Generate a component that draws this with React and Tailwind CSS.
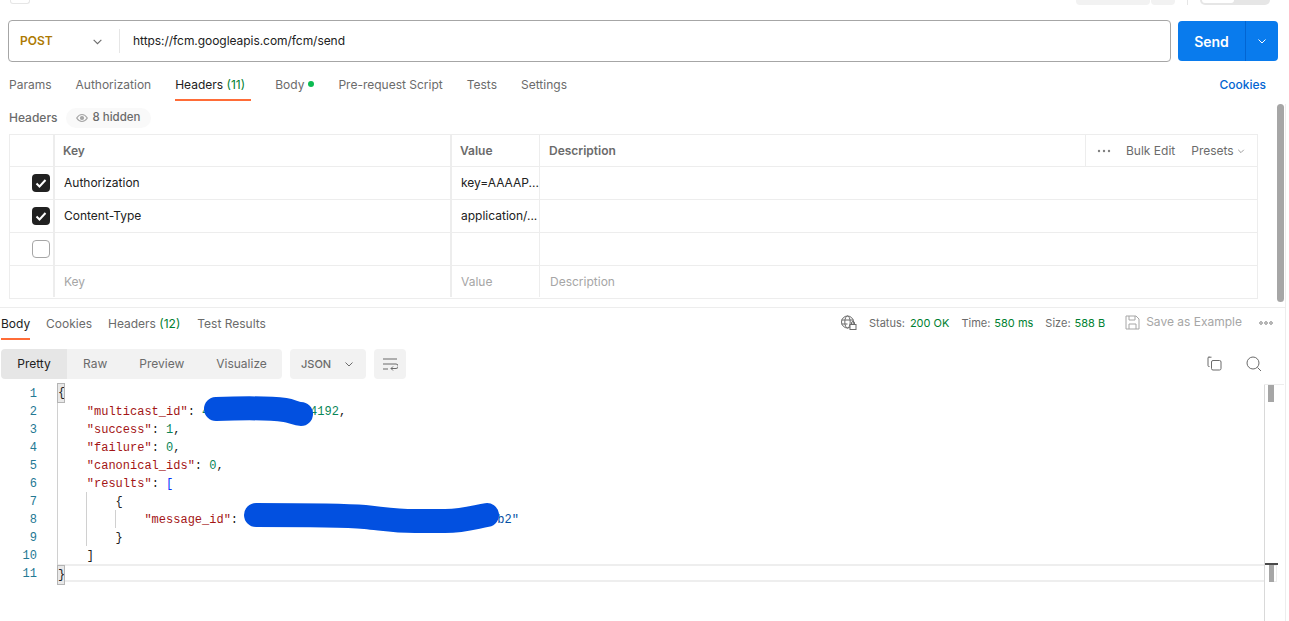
import React from "react";

const Chevron = ({ className = "", color = "#6b6b6b", size = 10 }) => (
  <svg width={size} height={size} viewBox="0 0 10 10" className={className} fill="none" stroke={color} strokeWidth="1">
    <path d="M1.5 3.5 5 7l3.5-3.5" />
  </svg>
);

const Check = () => (
  <div className="w-[18px] h-[18px] rounded-[4px] bg-[#212121] flex items-center justify-center">
    <svg width="12" height="12" viewBox="0 0 12 12" fill="none" stroke="#fff" strokeWidth="2">
      <path d="M1.5 6.5 4.5 9.5 10.5 3" />
    </svg>
  </div>
);

const Row = ({ check, k, v, d, muted }) => (
  <div className="flex h-[33px] last:h-[32px] last:pb-[1px] border-b border-[#ededed] last:border-b-0 text-[12px]">
    <div className="w-[45px] border-r-2 border-[#ededed] flex items-center justify-end pr-[3px] shrink-0">
      {check === "on" && <Check />}
      {check === "off" && <div className="w-[18px] h-[18px] rounded-[4px] border border-[#a6a6a6] bg-white" />}
    </div>
    <div className={`w-[397px] border-r-2 border-[#ededed] flex items-center pl-[9px] shrink-0 ${muted ? "text-[#a6a6a6]" : "text-[#212121]"}`}>{k}</div>
    <div className={`w-[88px] border-r border-[#ededed] flex items-center pl-[9px] shrink-0 ${muted ? "text-[#a6a6a6]" : "text-[#212121]"}`}>{v}</div>
    <div className={`flex-1 flex items-center pl-[10px] ${muted ? "text-[#a6a6a6]" : ""}`}>{d}</div>
  </div>
);

const K = ({ children }) => <span className="text-[#a31515]">{children}</span>;
const N = ({ children }) => <span className="text-[#098658]">{children}</span>;
const P = ({ children }) => <span className="text-[#212121]">{children}</span>;

const lines = [
  <span className="relative inline-block w-[6px] h-[18px] bg-[#e8e8e8] outline outline-1 outline-[#b5b5b5] leading-[18px] text-[#212121]">{"{"}</span>,
  <>{"    "}<K>"multicast_id"</K><P>: </P><N>4</N>{"              "}<N>4192</N><P>,</P></>,
  <>{"    "}<K>"success"</K><P>: </P><N>1</N><P>,</P></>,
  <>{"    "}<K>"failure"</K><P>: </P><N>0</N><P>,</P></>,
  <>{"    "}<K>"canonical_ids"</K><P>: </P><N>0</N><P>,</P></>,
  <>{"    "}<K>"results"</K><P>: </P><span className="text-[#0431fa]">[</span></>,
  <>{"        "}<P>{"{"}</P></>,
  <>{"            "}<K>"message_id"</K><P>: </P>{"                                   "}<span className="text-[#0451a5]">b2"</span></>,
  <>{"        "}<P>{"}"}</P></>,
  <>{"    "}<P>]</P></>,
  <span className="relative inline-block w-[6px] h-[18px] -mt-[2px] bg-[#e8e8e8] outline outline-1 outline-[#b5b5b5] leading-[18px] text-[#212121]">{"}"}</span>,
];

export default function App() {
  return (
    <div className="relative w-[1289px] h-[621px] overflow-hidden bg-white text-[12px] text-[#6b6b6b]" style={{ fontFamily: "Inter, sans-serif" }}>
      {/* top strip cut off by the window */}
      <div className="h-[20px] flex items-start pl-[10px] pr-[19px]">
        <div className="w-[20px] h-[4px] border border-t-0 border-[#e6e6e6] rounded-b-[3px]" />
        <div className="ml-auto flex items-start">
          <div className="w-[74px] h-[5px] bg-[#f2f2f2] rounded-b-[4px]" />
          <div className="ml-px w-[24px] h-[5px] bg-[#f2f2f2] rounded-b-[4px]" />
          <div className="ml-[12px] w-px h-[5px] bg-[#e6e6e6]" />
          <div className="ml-[12px] w-[70px] h-[5px] bg-[#e6e6e6] rounded-b-[5px] overflow-hidden">
            <div className="ml-[2px] w-[32px] h-[3px] bg-white rounded-b-[4px]" />
          </div>
        </div>
      </div>

      {/* url bar */}
      <div className="flex items-center h-[42px] pl-[8px]">
        <div className="w-[1163px] h-[42px] border border-[#a6a6a6] rounded-[4px] flex items-center">
          <span className="ml-[11px] w-[72px] font-semibold text-[#ad7a03]">POST</span>
          <Chevron size={11} />
          <div className="ml-[16px] w-px h-[24px] bg-[#e6e6e6]" />
          <span className="ml-[13px] text-[#212121] tracking-[-0.05px]">https://fcm.googleapis.com/fcm/send</span>
        </div>
        <div className="ml-[7px] w-[100px] h-[40px] rounded-[4px] bg-[#097bed] flex text-white">
          <div className="w-[67px] flex items-center justify-center text-[14px] font-semibold">Send</div>
          <div className="flex-1 border-l border-[#0265d2] flex items-center justify-center">
            <Chevron color="#ffffff" size={10} />
          </div>
        </div>
      </div>

      {/* request tabs */}
      <div className="flex h-[39px] pl-[9px] pr-[23px] pt-[4px] items-start">
        <div className="flex gap-[24px]">
          <span className="pt-[10px]">Params</span>
          <span className="pt-[10px]">Authorization</span>
          <span className="pt-[10px] w-[76px] h-[35px] text-[#212121] border-b-2 border-[#ff6c37] whitespace-nowrap">
            Headers <span className="text-[#007f31]">(11)</span>
          </span>
          <span className="pt-[10px] flex items-start gap-[4px]">Body<span className="w-[6px] h-[6px] mt-[5px] rounded-full bg-[#0cbb52]" /></span>
          <span className="pt-[10px]">Pre-request Script</span>
          <span className="pt-[10px]">Tests</span>
          <span className="pt-[10px]">Settings</span>
        </div>
        <span className="ml-auto pt-[10px] font-medium text-[#0265d2]">Cookies</span>
      </div>

      {/* headers subheader */}
      <div className="flex items-center h-[21px] mt-[6px] pl-[9px] gap-[8px]">
        <span className="font-medium">Headers</span>
        <span className="h-[20px] px-[10px] rounded-full bg-[#f9f9f9] flex items-center gap-[5px] text-[11.5px] font-medium">
          <svg width="12" height="10" viewBox="0 0 12 10" fill="none" stroke="#a6a6a6" strokeWidth="1.2">
            <path d="M.7 5C2.2 2.6 4 1.5 6 1.5S9.8 2.6 11.3 5C9.8 7.4 8 8.5 6 8.5S2.2 7.4.7 5Z" />
            <circle cx="6" cy="5" r="1.5" fill="#a6a6a6" />
          </svg>
          8 hidden
        </span>
      </div>

      {/* headers table */}
      <div className="ml-[9px] mt-[6px] w-[1249px] border border-[#ededed]">
        <div className="flex h-[32px] border-b border-[#ededed] font-semibold">
          <div className="w-[45px] border-r-2 border-[#ededed] shrink-0" />
          <div className="w-[397px] border-r-2 border-[#ededed] flex items-center pl-[8px] shrink-0">Key</div>
          <div className="w-[88px] border-r border-[#ededed] flex items-center pl-[8px] shrink-0">Value</div>
          <div className="flex-1 flex items-center pl-[9px]">Description</div>
          <div className="w-[172px] border-l border-[#ededed] flex items-center font-normal">
            <svg width="14" height="4" viewBox="0 0 14 4" className="ml-[11px]" fill="#808080">
              <circle cx="2" cy="2" r="1.2" /><circle cx="7" cy="2" r="1.2" /><circle cx="12" cy="2" r="1.2" />
            </svg>
            <span className="ml-[15px]">Bulk Edit</span>
            <span className="ml-[16px]">Presets</span>
            <Chevron className="ml-[3px]" size={8} color="#858585" />
          </div>
        </div>
        <Row check="on" k="Authorization" v="key=AAAAP..." />
        <Row check="on" k="Content-Type" v="application/..." />
        <Row check="off" />
        <Row muted k="Key" v="Value" d="Description" />
      </div>

      {/* response tabs */}
      <div className="mt-[8px] h-[33px] border-t border-[#ededed] mr-[4px] flex items-start pl-[1px] pr-[12px]">
        <div className="flex gap-[16px]">
          <span className="h-[32px] pt-[7px] w-[29px] text-[#212121] border-b-2 border-[#ff6c37]">Body</span>
          <span className="pt-[7px]">Cookies</span>
          <span className="pt-[7px]">Headers <span className="text-[#007f31]">(12)</span></span>
          <span className="pt-[7px] ml-[1px]">Test Results</span>
        </div>
        <div className="ml-auto flex items-center pt-[7px] text-[11px]">
          <svg width="17" height="16" viewBox="0 0 17 16" fill="none" stroke="#6b6b6b" strokeWidth="1">
            <circle cx="7.5" cy="7" r="6" />
            <ellipse cx="7.5" cy="7" rx="2.7" ry="6" />
            <path d="M1.5 5h12M1.5 9h6" />
            <rect x="10" y="9.5" width="6" height="5" fill="#fff" />
            <path d="M11.5 9.5V8a1.5 1.5 0 0 1 3 0v1.5" />
          </svg>
          <span className="ml-[12px]">Status:</span>
          <span className="ml-[5px] text-[#007f31]">200 OK</span>
          <span className="ml-[12px]">Time:</span>
          <span className="ml-[4px] text-[#007f31]">580 ms</span>
          <span className="ml-[12px]">Size:</span>
          <span className="ml-[4px] text-[#007f31]">588 B</span>
          <svg className="ml-[20px] -mt-[2px]" width="15" height="15" viewBox="0 0 15 15" fill="none" stroke="#a6a6a6" strokeWidth="1">
            <path d="M1 1h10l3 3v10H1Z" /><path d="M4 1v4h6V1M4 14V9h7v5" />
          </svg>
          <span className="ml-[6px] -mt-[2px] text-[12px] text-[#a6a6a6]">Save as Example</span>
          <svg className="ml-[17px]" width="14" height="4" viewBox="0 0 14 4" fill="none" stroke="#6b6b6b" strokeWidth=".8">
            <circle cx="2" cy="2" r="1.3" /><circle cx="7" cy="2" r="1.3" /><circle cx="12" cy="2" r="1.3" />
          </svg>
        </div>
      </div>

      {/* response toolbar */}
      <div className="mt-[8px] h-[31px] flex items-center pl-[1px] pr-[27px]">
        <div className="w-[281px] h-[30px] bg-[#f2f2f2] rounded-[4px] flex items-center overflow-hidden">
          <span className="w-[66px] h-full bg-[#e6e6e6] text-[#212121] flex items-center justify-center rounded-l-[4px]">Pretty</span>
          <span className="ml-[16px]">Raw</span>
          <span className="ml-[32px]">Preview</span>
          <span className="ml-[32px]">Visualize</span>
        </div>
        <div className="ml-[8px] w-[76px] h-[30px] bg-[#f2f2f2] rounded-[4px] flex items-center font-medium text-[11px]">
          <span className="ml-[11px] mt-[1px]">JSON</span>
          <Chevron className="ml-[13px]" size={10} />
        </div>
        <div className="ml-[8px] w-[32px] h-[30px] bg-[#f2f2f2] rounded-[4px] flex items-center justify-center">
          <svg width="16" height="14" viewBox="0 0 16 14" fill="none" stroke="#6b6b6b" strokeWidth="1">
            <path d="M1 2h14M1 7h13a2 2 0 0 1 0 4.5H9M11 9.5l-2 2 2 2M1 12h5" />
          </svg>
        </div>
        <div className="ml-auto flex items-center gap-[24px]">
          <svg width="15" height="15" viewBox="0 0 15 15" fill="none" stroke="#6b6b6b" strokeWidth="1">
            <rect x="4.5" y="4.5" width="9.5" height="9.5" rx="1.5" />
            <path d="M2.5 10.5H2A1 1 0 0 1 1 9.5V2a1 1 0 0 1 1-1h.5" />
            <path d="M1.5 1.2h3" />
          </svg>
          <svg width="16" height="16" viewBox="0 0 16 16" fill="none" stroke="#6b6b6b" strokeWidth="1">
            <circle cx="7" cy="7" r="6" /><path d="m11.5 11.5 3.5 3.5" />
          </svg>
        </div>
      </div>

      {/* code */}
      <div className="relative mt-[5px] w-[1265px] h-[238px] border-r border-[#d9d9d9] flex" style={{ fontFamily: '"Liberation Mono", monospace' }}>
        <div className="w-[37px] text-right text-[#237893] text-[12px] leading-[18px] shrink-0">
          {lines.map((_, i) => <div key={i} className="h-[18px] leading-[20px]">{i + 1}</div>)}
        </div>
        <div className="relative ml-[20px] flex-1 border-l border-[#d0d0d0] h-[197px] text-[12px] leading-[18px] whitespace-pre">
          <span className="absolute left-[28px] top-[108px] h-[54px] w-px bg-[#d0d0d0]" />
          <span className="absolute left-[57px] top-[126px] h-[18px] w-px bg-[#d0d0d0]" />
          {lines.map((l, i) => (
            <div key={i} className={`relative h-[18px] ${i === 10 ? "border-y-2 border-[#eeeeee]" : ""}`}>
              {i === 0 || i === 10 ? l : <span className="relative top-[1px]">{l}</span>}
            </div>
          ))}
        </div>
      </div>

      {/* redaction strokes, page scrollbars and minimap over the content */}
      <svg className="absolute left-0 top-0 pointer-events-none" width="1289" height="621" fill="none" stroke="#0250e0" strokeWidth="24" strokeLinecap="round" strokeLinejoin="round">
        <path d="M216 409C245 408 270 408 285 410 292 411 296 414 301 414" />
        <path d="M256 515C300 515 340 515 365 517 385 519 395 521 415 521L445 521C465 521 475 517 487 515" />
      </svg>
      <div className="absolute left-[1277px] top-[104px] w-[7px] h-[198px] rounded-full bg-[#a6a6a6]" />
      <div className="absolute left-[1285px] top-[104px] w-px h-[517px] bg-[#ededed]" />
      <div className="absolute left-[1264px] top-[384px] w-[20px] h-[1px] bg-[#ededed]" />
      <div className="absolute left-[1268px] top-[385px] w-[6px] h-[17px] bg-[#a6a6a6]" />
      <div className="absolute left-[1265px] top-[563px] w-[13px] h-[2px] bg-[#4a4a4a]" />
      <div className="absolute left-[1269px] top-[565px] w-[5px] h-[17px] bg-[#a6a6a6]" />
      <div className="absolute left-[1274px] top-[565px] w-[3px] h-[17px] border border-l-0 border-[#ededed]" />
    </div>
  );
}
